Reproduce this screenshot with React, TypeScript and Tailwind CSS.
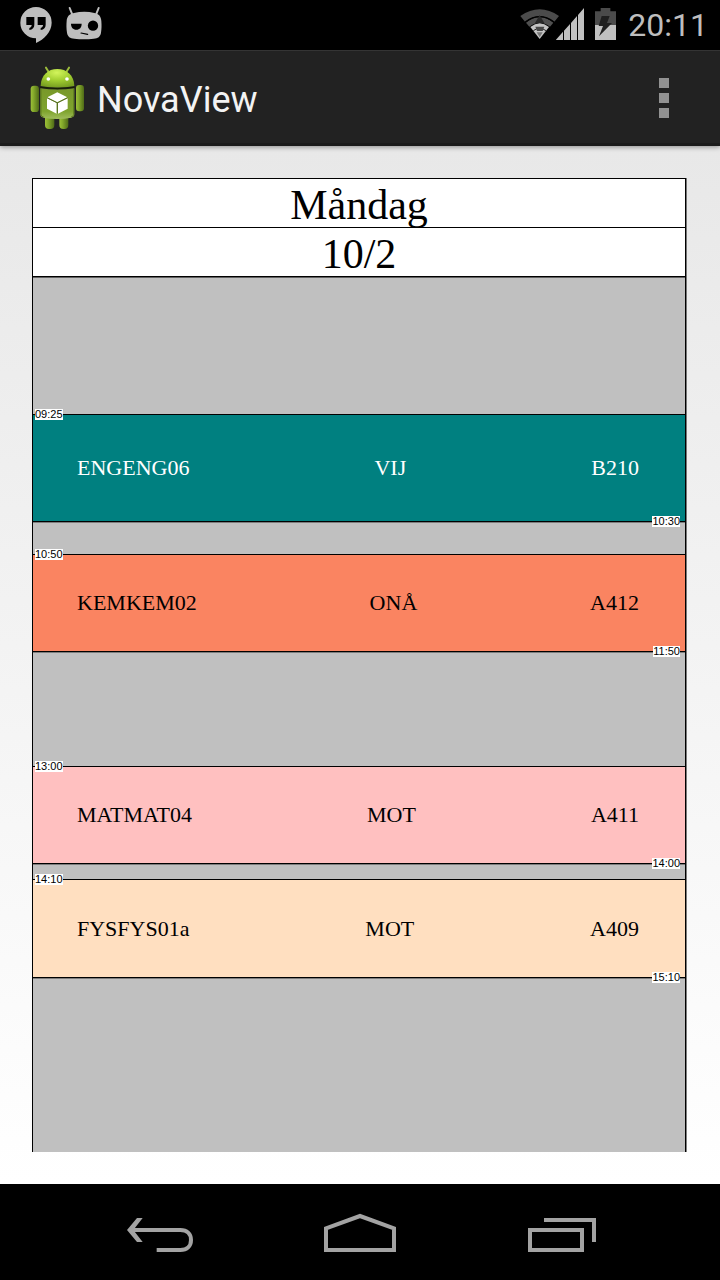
type Lesson = {
  course: string;
  teacher: string;
  room: string;
  start: string;
  end: string;
  box: string;
};

const lessons: Lesson[] = [
  { course: "ENGENG06", teacher: "VIJ", room: "B210", start: "09:25", end: "10:30", box: "mt-[137px] h-[108px] bg-[#008080] text-white" },
  { course: "KEMKEM02", teacher: "ONÅ", room: "A412", start: "10:50", end: "11:50", box: "mt-8 h-[98px] bg-[#fa8461] text-black" },
  { course: "MATMAT04", teacher: "MOT", room: "A411", start: "13:00", end: "14:00", box: "mt-[114px] h-[98px] bg-[#ffc0c0] text-black" },
  { course: "FYSFYS01a", teacher: "MOT", room: "A409", start: "14:10", end: "15:10", box: "mt-[15px] h-[99px] bg-[#ffdfc0] text-black" },
];

function HangoutsIcon() {
  return (
    <svg viewBox="60 18 96 114" className="h-[38px] w-8" aria-hidden="true">
      <path d="M108 21a47 47 0 0 0 0 94v14c24-11 47-34 47-61a47 47 0 0 0-47-47Z" fill="#bebebe" />
      <path d="M79 51h24v23c0 9-5 14-15 16v-6c5-2 7-5 7-9H79ZM113 51h24v23c0 9-5 14-15 16v-6c5-2 7-5 7-9h-16Z" fill="#000" />
    </svg>
  );
}

function CyanogenIcon() {
  return (
    <svg viewBox="198 18 108 102" className="h-[34px] w-9" aria-hidden="true">
      <path d="m209 24 8 20M296 24l-8 20" stroke="#bebebe" strokeWidth="6" strokeLinecap="round" />
      <path d="M222 39c20-5 42-5 61 0 14 3 20 10 21 24 1 12 1 24-1 35-2 12-9 17-22 18-19 2-39 2-58 0-13-1-20-6-22-18-2-12-2-24-1-35 1-14 8-21 22-24Z" fill="#bebebe" />
      <path d="M213 71h32c0 11-6 18-16 18s-16-7-16-18Z" fill="#000" />
      <circle cx="279" cy="77" r="15.5" fill="#000" />
      <path d="m243 99 20 4" stroke="#000" strokeWidth="3.5" strokeLinecap="round" />
    </svg>
  );
}

function SignalIcons() {
  return (
    <svg viewBox="30 24 195 96" className="h-8 w-[65px]" aria-hidden="true">
      <path d="M31 48Q89 8 147 48L133 65Q89 34 45 65Z" fill="#4b4b4b" />
      <path d="M48 68Q89 36 130 68L120 80Q89 56 58 80Z" fill="#505050" />
      <path d="M61 81Q89 59 117 81L89 117Z" fill="#c4c4c4" />
      <path d="M46 66Q89 34 132 66" fill="none" stroke="#000" strokeWidth="4" />
      <path d="m89 45 14 24H75Z" fill="#292929" />
      <path d="M70 92Q89 78 108 92" fill="none" stroke="#252525" strokeWidth="3" />
      <path d="M76 80h27l-5 13H81Z" fill="#484848" />
      <path d="m89 112-9-15h18Z" fill="#777" />
      <path d="M138 120v-1l21-24v25ZM162 120V92l18-20v48ZM183 120V69l18-21v72ZM204 120V45l18-21v96Z" fill="#c0c0c0" />
    </svg>
  );
}

function BatteryIcon() {
  return (
    <svg viewBox="255 24 63 96" className="h-8 w-[21px]" aria-hidden="true">
      <path d="M255 34h17V24h29v10h17v41h-63Z" fill="#4b4b4b" />
      <path d="M255 75h63v45h-63Z" fill="#c0c0c0" />
      <path d="M275 48h24l-8 21h15l-39 40 12-31h-13Z" fill="#202020" />
    </svg>
  );
}

function RobotIcon() {
  return (
    <svg viewBox="42 48 165 192" className="h-16 w-[55px]" aria-hidden="true">
      <defs>
        <linearGradient id="limb" x1="0" x2="1">
          <stop offset="0" stopColor="#9dc038" />
          <stop offset="0.35" stopColor="#84a92b" />
          <stop offset="1" stopColor="#4f6a17" />
        </linearGradient>
        <linearGradient id="torso" x1="0" x2="0" y1="0" y2="1">
          <stop offset="0" stopColor="#78982a" />
          <stop offset="0.75" stopColor="#7fa42e" />
          <stop offset="1" stopColor="#a0bd5c" />
        </linearGradient>
        <radialGradient id="head" cx="0.48" cy="0.2" r="0.8">
          <stop offset="0" stopColor="#d2f45c" />
          <stop offset="0.5" stopColor="#a3d032" />
          <stop offset="1" stopColor="#789f21" />
        </radialGradient>
      </defs>
      <path d="m90 53 10 16M159 53l-10 16" stroke="#9dbd3c" strokeWidth="6" strokeLinecap="round" />
      <rect x="87" y="190" width="28" height="47" rx="12" fill="url(#limb)" />
      <rect x="130" y="190" width="27" height="47" rx="12" fill="url(#limb)" />
      <rect x="44" y="107" width="25" height="79" rx="10" fill="url(#limb)" />
      <rect x="180" y="105" width="24" height="79" rx="10" fill="url(#limb)" />
      <path d="M73 115q51 7 102 0v78q0 8-9 10-42 8-84 0-9-2-9-10Z" fill="url(#torso)" />
      <path d="M75 117v76q0 7 8 8M173 117v76q0 7-8 8" fill="none" stroke="#617e20" strokeWidth="3" />
      <path d="M74 108C75 75 96 57 124 57s50 18 51 51q-50 9-101 0Z" fill="url(#head)" />
      <path d="M73 112q51 8 102 0" fill="none" stroke="#172000" strokeWidth="3" />
      <circle cx="97" cy="87" r="5.5" fill="#fff" />
      <circle cx="153" cy="87" r="5.5" fill="#fff" />
      <path d="m124 127 30 15-30 15-30-15ZM93 145l29 14v32l-29-15ZM155 145l-29 14v32l29-15Z" fill="#fff" />
      <path d="m94 143.500 30 15 30-15M124 158v32" fill="none" stroke="#4c601e" strokeWidth="2.500" />
    </svg>
  );
}

function StatusBar() {
  return (
    <div className="flex h-[50px] items-start bg-black pl-5 pr-3">
      <div className="flex items-start gap-[14px] pt-1.5">
        <HangoutsIcon />
        <CyanogenIcon />
      </div>
      <div className="ml-auto flex items-start">
        <div className="flex gap-2.5 pt-2">
          <SignalIcons />
          <BatteryIcon />
        </div>
        <time className="ml-3 text-[32px] leading-[51px] text-[#bebebe]">20:11</time>
      </div>
    </div>
  );
}

function ActionBar() {
  return (
    <header className="relative z-10 flex h-24 items-center border-b-[3px] border-t border-b-[#1b1b1b] border-t-[#343434] bg-[#222] pl-[30px] pr-[41px] pt-0.5 shadow-[0_1px_5px_rgba(0,0,0,0.4)]">
      <RobotIcon />
      <h1 className="ml-3 pt-1 text-[36px] leading-[44px] text-[#f3f3f3]">NovaView</h1>
      <button type="button" aria-label="More options" className="ml-auto flex flex-col gap-[5px] px-2.5">
        <span className="size-2.5 bg-[#929292]" />
        <span className="size-2.5 bg-[#929292]" />
        <span className="size-2.5 bg-[#929292]" />
      </button>
    </header>
  );
}

function LessonBlock({ lesson }: { lesson: Lesson }) {
  const label = "absolute bg-white font-['Liberation_Sans',Arial,sans-serif] text-[11px] leading-[11px] text-black";
  return (
    <li className={`relative flex items-center justify-between border-y border-black pl-11 pr-[46px] text-[22px] leading-7 shadow-[0_1px_0_rgba(0,0,0,0.35)] ${lesson.box}`}>
      <time className={`${label} -top-1.5 left-0.5`}>{lesson.start}</time>
      <span>{lesson.course}</span>
      <span>{lesson.teacher}</span>
      <span>{lesson.room}</span>
      <time className={`${label} -bottom-1.5 right-[5px]`}>{lesson.end}</time>
    </li>
  );
}

function NavigationBar() {
  const button = "flex flex-1 items-center justify-center";
  const icon = "h-12 w-[72px]";
  return (
    <nav className="flex h-24 bg-black px-[60px]">
      <button type="button" aria-label="Back" className={button}>
        <svg viewBox="42 84 216 144" className={icon} fill="none" stroke="#a3a3a3" strokeWidth="12">
          <path d="M62 150h149c20 0 32 12 32 30s-12 30-32 30h-71" />
          <path d="M81 114h17l-28 36 28 36H81l-30-36Z" fill="#a3a3a3" stroke="none" />
        </svg>
      </button>
      <button type="button" aria-label="Home" className={button}>
        <svg viewBox="642 84 216 144" className={icon} fill="none" stroke="#a3a3a3" strokeWidth="12">
          <path d="m750 108 102 37v65H648v-65Z" />
        </svg>
      </button>
      <button type="button" aria-label="Recent apps" className={button}>
        <svg viewBox="72 204 216 144" className={icon} fill="none" stroke="#a3a3a3" strokeWidth="12">
          <path d="M90 270h156v60H90ZM132 240h150v66" />
        </svg>
      </button>
    </nav>
  );
}

export default function App() {
  const heading = "relative h-[49px] border-b border-black bg-white pt-0.5 text-center text-[42px] leading-[48px] shadow-[0_1px_0_rgba(0,0,0,0.5)]";
  return (
    <div className="flex min-h-screen flex-col bg-black font-[Roboto,sans-serif]">
      <StatusBar />
      <ActionBar />
      <main className="flex flex-1 flex-col bg-linear-to-b from-[#e8e8e8] to-white pb-8 pl-8 pr-[34px] pt-8">
        <section className="flex-1 border-x border-t border-black bg-[#c0c0c0] font-['Liberation_Serif','Times_New_Roman',serif] text-black shadow-[1px_0_0_rgba(0,0,0,0.5)]">
          <h2 className={heading}>Måndag</h2>
          <p className={heading}>10/2</p>
          <ol>
            {lessons.map((lesson) => (
              <LessonBlock key={lesson.start} lesson={lesson} />
            ))}
          </ol>
        </section>
      </main>
      <NavigationBar />
    </div>
  );
}
